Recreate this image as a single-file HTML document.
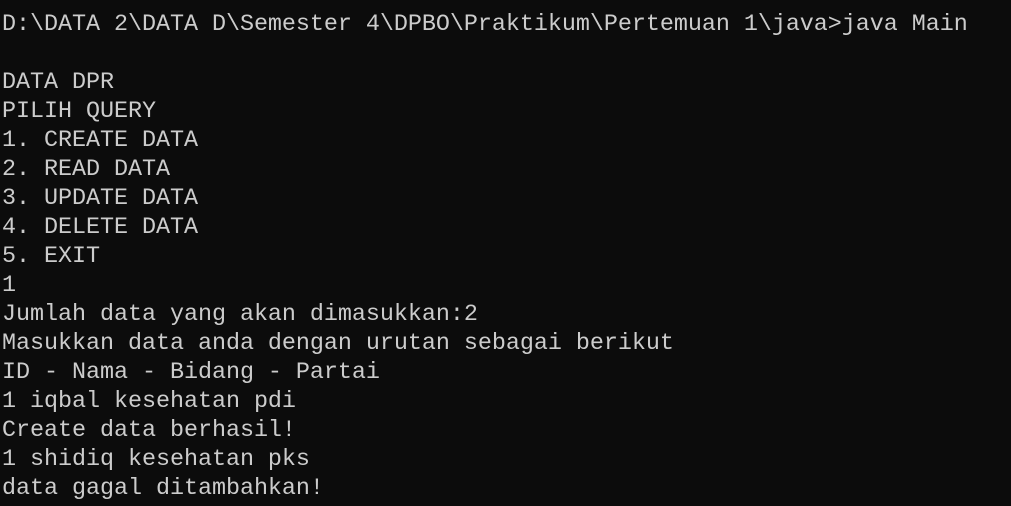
<!DOCTYPE html>
<html><head><meta charset="utf-8"><style>
html,body{margin:0;padding:0;background:#0c0c0c;width:1011px;height:506px;overflow:hidden}
pre{margin:0;position:absolute;left:2px;top:11px;font-family:"Liberation Mono",monospace;font-size:23.4px;line-height:29px;color:#cccccc;letter-spacing:-0.04px}
</style></head><body>
<pre>D:\DATA 2\DATA D\Semester 4\DPBO\Praktikum\Pertemuan 1\java&gt;java Main

DATA DPR
PILIH QUERY
1. CREATE DATA
2. READ DATA
3. UPDATE DATA
4. DELETE DATA
5. EXIT
1
Jumlah data yang akan dimasukkan:2
Masukkan data anda dengan urutan sebagai berikut
ID - Nama - Bidang - Partai
1 iqbal kesehatan pdi
Create data berhasil!
1 shidiq kesehatan pks
data gagal ditambahkan!</pre>
</body></html>
